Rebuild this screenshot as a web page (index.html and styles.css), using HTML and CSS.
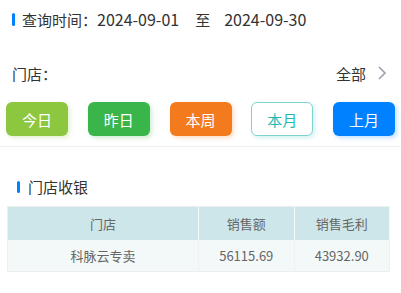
FILE: index.html
```html
<!DOCTYPE html>
<html lang="zh-CN">
<head>
    <meta charset="UTF-8">
    <meta name="viewport" content="width=device-width, initial-scale=1.0">
    <title>门店收银</title>
    <link rel="stylesheet" href="styles.css">
</head>
<body>
    <div class="query-bar">
        <span class="mark"></span>
        <span class="label">查询时间：</span>
        <span class="date">2024-09-01</span>
        <span class="to">至</span>
        <span class="date">2024-09-30</span>
    </div>

    <div class="store-row">
        <span class="label">门店：</span>
        <span class="pick">全部
            <svg class="arrow" width="10" height="16" viewBox="0 0 10 16"><path d="M2 2 L8 8 L2 14" fill="none" stroke="#9aa3ad" stroke-width="1.6"/></svg>
        </span>
    </div>

    <div class="btn-row">
        <button class="btn olive">今日</button>
        <button class="btn green">昨日</button>
        <button class="btn orange">本周</button>
        <button class="btn line-cyan">本月</button>
        <button class="btn blue">上月</button>
    </div>

    <div class="section">
        <div class="title"><span class="mark"></span>门店收银</div>
        <table class="report">
            <thead>
                <tr><th class="col-store">门店</th><th>销售额</th><th>销售毛利</th></tr>
            </thead>
            <tbody>
                <tr><td>科脉云专卖</td><td>56115.69</td><td>43932.90</td></tr>
            </tbody>
        </table>
    </div>
</body>
</html>
```

FILE: styles.css
```css
body {
    margin: 0;
    padding: 0;
    background-color: #fff;
    font-family: "Noto Sans CJK SC", "Noto Sans", sans-serif;
    color: #333;
}

.mark {
    display: inline-block;
    width: 3px;
    height: 13px;
    border-radius: 2px;
    background-color: #0081ff;
}

.query-bar {
    display: flex;
    align-items: center;
    height: 38px;
    padding-left: 12px;
    font-size: 16px;
}

.query-bar .mark {
    margin-right: 7px;
}

.query-bar .label {
    font-size: 15px;
}

.query-bar .to {
    font-size: 15px;
    margin: 0 14px 0 16px;
}

.store-row {
    display: flex;
    justify-content: space-between;
    align-items: center;
    height: 34px;
    margin-top: 18px;
    padding: 0 14px 0 12px;
    font-size: 15px;
}

.store-row .pick {
    display: flex;
    align-items: center;
    gap: 11px;
}

.btn-row {
    display: flex;
    justify-content: space-between;
    padding: 12px 6px 10px;
    border-bottom: 1px solid #f0f0f0;
}

.btn {
    width: 62px;
    height: 34px;
    border: none;
    border-radius: 6px;
    color: #fff;
    font-family: inherit;
    font-size: 15px;
    padding: 0;
}

.olive {
    background-color: #8dc63f;
    box-shadow: 2px 2px 4px rgba(141, 198, 63, 0.25);
}

.green {
    background-color: #39b54a;
    box-shadow: 2px 2px 4px rgba(57, 181, 74, 0.25);
}

.orange {
    background-color: #f37b1d;
    box-shadow: 2px 2px 4px rgba(243, 123, 29, 0.25);
}

.line-cyan {
    background-color: #fff;
    color: #1cbbb4;
    border: 1px solid #7fd3cf;
    box-shadow: 2px 2px 4px rgba(28, 187, 180, 0.2);
}

.blue {
    background-color: #0081ff;
    box-shadow: 2px 2px 4px rgba(0, 129, 255, 0.25);
}

.section {
    padding: 29px 11px 0 7px;
}

.title {
    display: flex;
    align-items: center;
    padding-left: 10px;
    font-size: 15px;
    color: #333;
    margin-bottom: 9px;
}

.title .mark {
    height: 12px;
    margin-right: 8px;
}

.report {
    width: 100%;
    border-collapse: collapse;
    border: 1px solid #eeeeee;
    font-size: 13px;
    color: #666;
}

.report th,
.report td {
    text-align: center;
    font-weight: normal;
    border-right: 1px solid #f0f0f0;
}

.report th {
    height: 31px;
    background-color: #cde6ea;
    border-right-color: #f4fafa;
}

.report td {
    height: 29px;
    background-color: #f3f9f9;
}

.report .col-store {
    width: 50%;
}
```
